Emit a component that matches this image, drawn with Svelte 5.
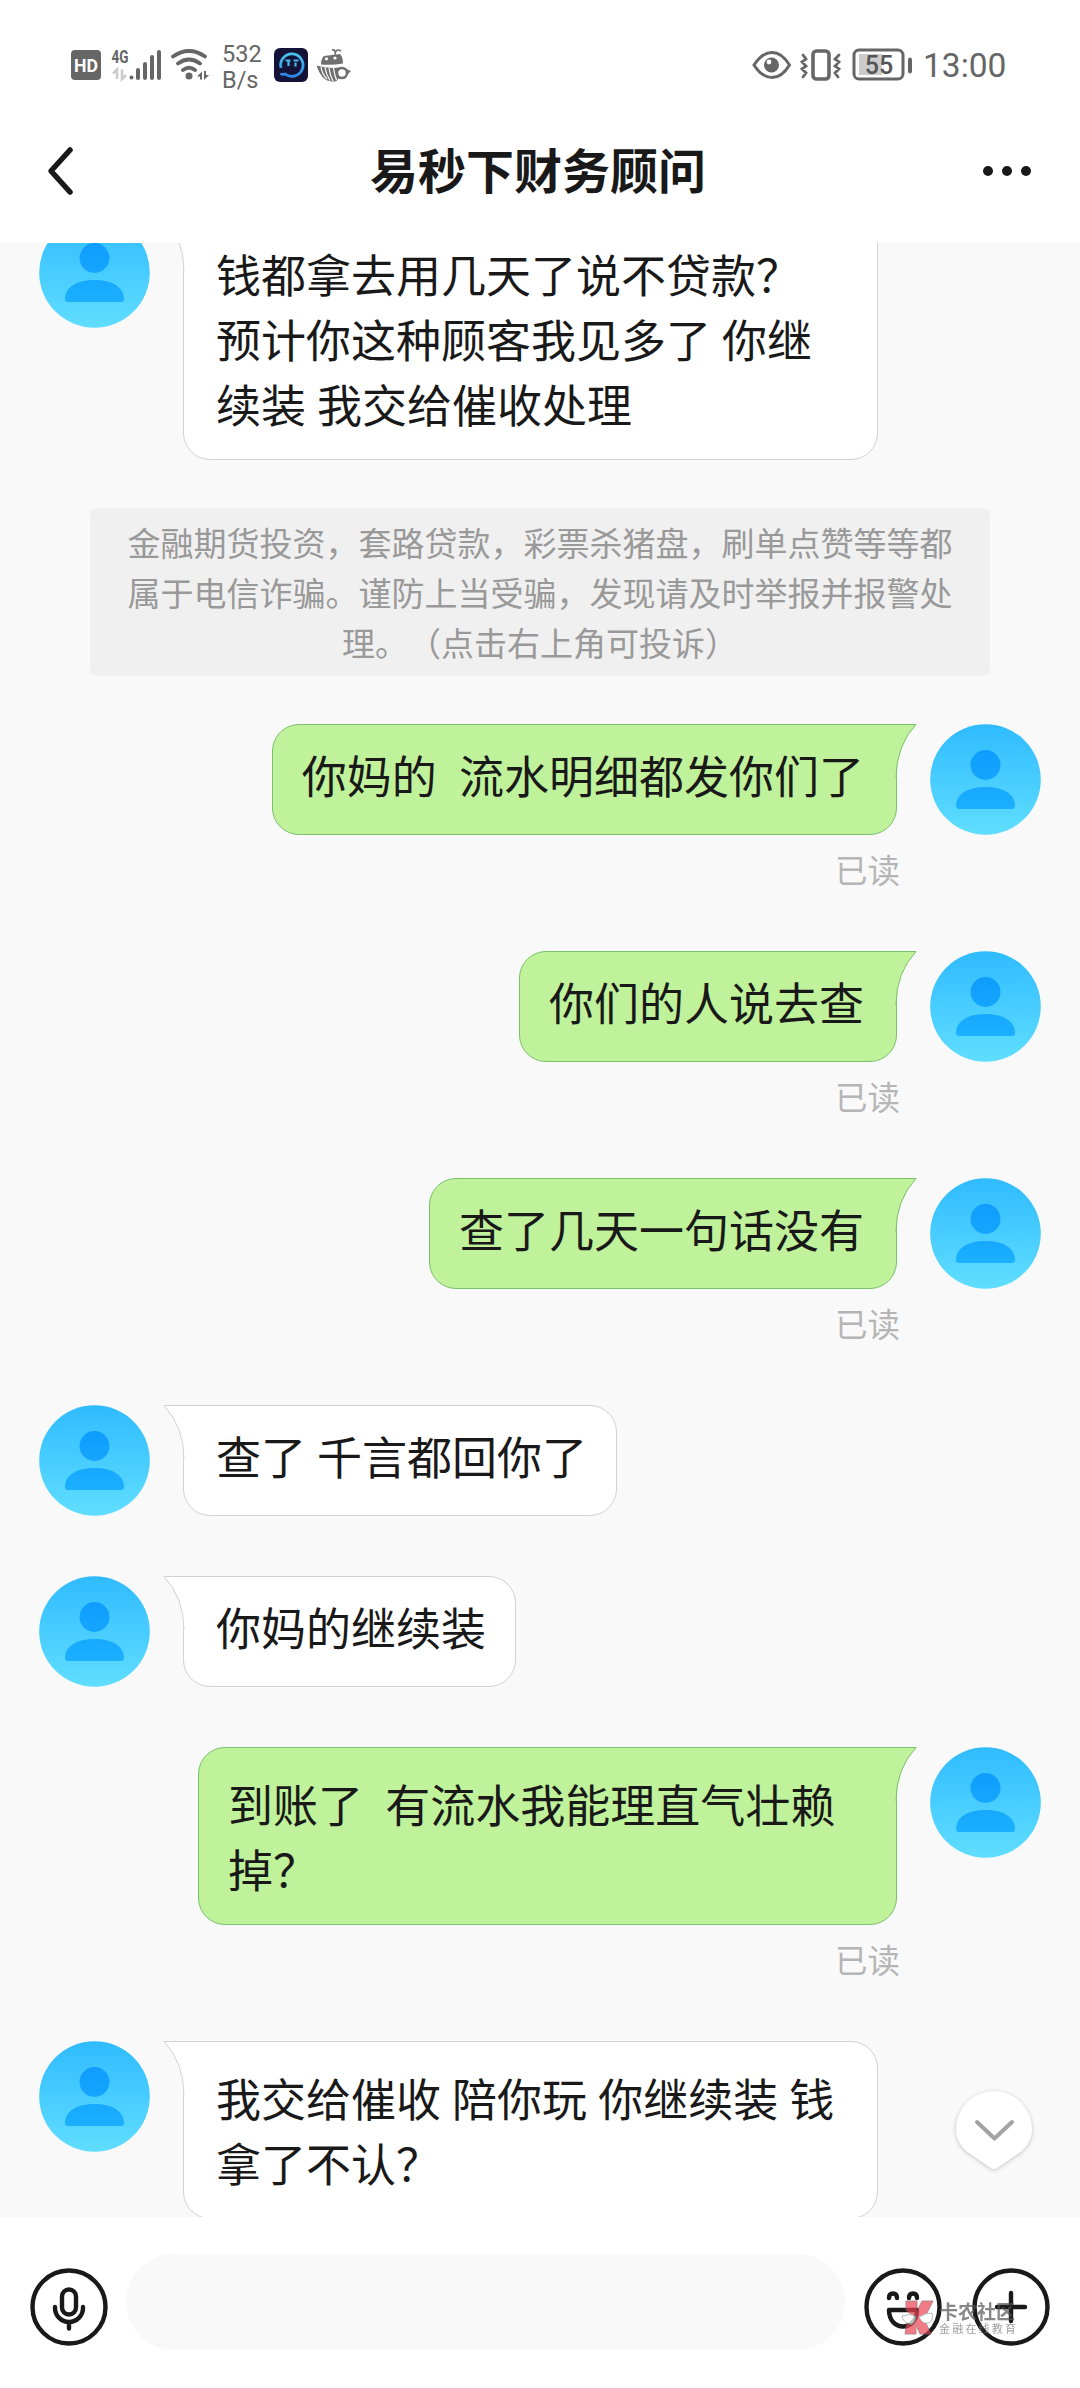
<script lang="ts">
	type Item = {
		kind: 'in' | 'out' | 'notice';
		text: string;
	};

	const title = '易秒下财务顾问';

	const items: Item[] = [
		{ kind: 'in', text: '钱都拿去用几天了说不贷款？\n预计你这种顾客我见多了 你继\n续装 我交给催收处理' },
		{
			kind: 'notice',
			text: '金融期货投资，套路贷款，彩票杀猪盘，刷单点赞等等都\n属于电信诈骗。谨防上当受骗，发现请及时举报并报警处\n理。（点击右上角可投诉）'
		},
		{ kind: 'out', text: '你妈的  流水明细都发你们了' },
		{ kind: 'out', text: '你们的人说去查' },
		{ kind: 'out', text: '查了几天一句话没有' },
		{ kind: 'in', text: '查了 千言都回你了' },
		{ kind: 'in', text: '你妈的继续装' },
		{ kind: 'out', text: '到账了  有流水我能理直气壮赖\n掉？' },
		{ kind: 'in', text: '我交给催收 陪你玩 你继续装 钱\n拿了不认？' }
	];
</script>

{#snippet avatar()}
	<svg class="avatar" viewBox="0 0 111 111" aria-hidden="true">
		<defs>
			<linearGradient id="sky" x1="0" y1="0" x2="0" y2="1">
				<stop offset="0" stop-color="#2fbbff" />
				<stop offset="1" stop-color="#60deff" />
			</linearGradient>
			<linearGradient id="person" x1="0" y1="26" x2="0" y2="86" gradientUnits="userSpaceOnUse">
				<stop offset="0" stop-color="#0f9cff" />
				<stop offset="1" stop-color="#1cb0ff" />
			</linearGradient>
		</defs>
		<circle cx="55.5" cy="55.5" r="55.3" fill="url(#sky)" />
		<circle cx="55.5" cy="41" r="15" fill="url(#person)" />
		<path d="M26 82C26 70 38 63 55.5 63S85 70 85 82q0 3-3 3H29q-3 0-3-3z" fill="url(#person)" />
	</svg>
{/snippet}

<div class="screen">
	<div class="status">
		<svg class="status-left" viewBox="0 0 150 40" aria-hidden="true">
			<rect x="1" y="5" width="30" height="30" rx="4" fill="#666" />
			<text x="16" y="26.5" class="hd" text-anchor="middle" textLength="24" lengthAdjust="spacingAndGlyphs">HD</text>
			<text x="41.500" y="17.500" class="net" textLength="17" lengthAdjust="spacingAndGlyphs">4G</text>
			<path d="M43 28.500l4-4v9.500M52 24.500v9.500l4-4" stroke="#ccc" stroke-width="2.600" fill="none" />
			<g stroke="#666" stroke-width="4" stroke-linecap="round" fill="none">
				<path d="M61.500 32.500v.1M68 25v8M75 19v14M82 12v21M89 7v26" />
				<path d="M103 11.500Q119 .5 135 11.500M108 18.500Q119 10.500 130 18.500M113 25Q119 20.500 125 25" stroke-width="3.800" />
			</g>
			<circle cx="119" cy="31" r="3.500" fill="#666" />
			<path d="M127 31.500l5-5v8h-2v-3zM134 26v9l5-5h-3v-4z" fill="#666" />
		</svg>
		<div class="speed">532<br />B/s</div>
		<svg class="status-apps" viewBox="0 0 80 36" aria-hidden="true">
			<defs>
				<linearGradient id="ring" x1="0" y1="0" x2="0" y2="1">
					<stop offset="0" stop-color="#49c5e8" />
					<stop offset="1" stop-color="#2d85e6" />
				</linearGradient>
			</defs>
			<rect x="0" y="1" width="34" height="34" rx="6" fill="#151238" />
			<path d="M7 21A11.200 11.200 0 1 1 11 27q-2.500 1-4.500-.5" fill="none" stroke="url(#ring)" stroke-width="2.800" />
			<path d="M11.500 13.500h5M19.500 13.500h5M14.500 14v5M21.500 15.500v4" stroke="#45b8e8" stroke-width="2.200" fill="none" />
			<g fill="#707070">
				<path d="M50 9l16-2q3 3 3 9.500-11 2-22 1 0-6 3-8.500z" />
				<path d="M42.500 18.500q13 4 25 1.500 0 9-5 14-8 2-14-4-4-5-6-11.500z" />
				<path d="M70 21l7 3-4 4-4-2z" />
			</g>
			<g fill="none" stroke="#fff" stroke-width="1.200">
				<path d="M47 20q1 7 6 12M51 20.500q1 7 5 13M55 21q1 7 4 13M59.500 21q1 7 3 12" />
			</g>
			<circle cx="68" cy="26" r="5" fill="#fff" stroke="#707070" stroke-width="2.600" />
			<path d="M61 8q1-6-3-5M61 7q1-6 6-3" fill="none" stroke="#707070" stroke-width="1.600" />
			<circle cx="52.500" cy="11.800" r="1.600" fill="#fff" />
			<circle cx="61" cy="11" r="1.600" fill="#fff" />
		</svg>
		<svg class="status-right" viewBox="0 0 164 40" aria-hidden="true">
			<g fill="none" stroke="#666" stroke-width="3">
				<path d="M2 20Q10 7.500 20 7.500T37.500 20Q30 32.500 20 32.500T2 20z" />
				<rect x="61" y="6" width="16" height="28" rx="3.500" stroke-width="3.600" />
				<path d="M51 10l3 4-4 3 4 4-4 3 4 4-3 4M87 10l-4 4 4 3-4 4 4 3-4 4 3 4" stroke-width="2.800" stroke-linecap="round" />
				<rect x="102" y="5" width="49" height="29" rx="5" />
			</g>
			<circle cx="19.500" cy="20" r="7.500" fill="#666" />
			<circle cx="17" cy="17" r="2.400" fill="#fff" />
			<rect x="107" y="9" width="23" height="21" fill="#ccc" />
			<rect x="156" y="12.500" width="4" height="16" rx="2" fill="#666" />
			<text x="127" y="28.500" class="level" text-anchor="middle">55</text>
		</svg>
		<span class="clock">13:00</span>
	</div>

	<header>
		<svg class="back" viewBox="0 0 30 50" aria-label="返回">
			<path d="M24 4L5 25l19 21" />
		</svg>
		<h1>{title}</h1>
		<svg class="more" viewBox="0 0 50 12" aria-label="更多">
			<circle cx="6" cy="6" r="5" />
			<circle cx="25" cy="6" r="5" />
			<circle cx="44" cy="6" r="5" />
		</svg>
	</header>

	<main>
		{#each items as item}
			{#if item.kind === 'notice'}
				<p class="notice">{item.text}</p>
			{:else}
				<div class="row {item.kind}">
					{@render avatar()}
					<div class="content">
						<div class="bubble" class:multi={item.text.includes('\n')}>
							<span class="text">{item.text}</span>
							<svg class="tail" viewBox="0 0 22 54" aria-hidden="true">
								<path class="tail-fill" d="M0 0H21.500Q1.500 22 1.500 54H0z" />
								<path class="tail-line" d="M0 .5H21Q1 22 1 54" />
							</svg>
						</div>
						{#if item.kind === 'out'}
							<span class="read">已读</span>
						{/if}
					</div>
				</div>
			{/if}
		{/each}

		<svg class="jump" viewBox="0 0 90 96" aria-label="回到底部">
			<path class="jump-pin" d="M17 68C9 60 7 53 7 46a38 38 0 0 1 76 0c0 7-2 14-10 22L49 84.500q-4 3-8 0z" />
			<path class="jump-arrow" d="M28 39l17.500 16.500L63 39" />
		</svg>
	</main>

	<footer>
		<svg class="tool" viewBox="0 0 80 80" aria-label="语音">
			<circle cx="40" cy="40" r="36.500" />
			<rect x="33" y="22.500" width="14" height="25" rx="7" />
			<path d="M26 40v1a14 14 0 0 0 28 0v-1M40 55v6.500" />
		</svg>
		<div class="field"></div>
		<svg class="tool emoji" viewBox="0 0 80 80" aria-label="表情">
			<circle cx="40" cy="40" r="36.500" />
			<path d="M26 31q0-4.500 4-4.500t4 4.500M46 31q0-4.500 4-4.500t4 4.500M26 43h28c0 22-28 22-28 0z" />
		</svg>
		<svg class="tool" viewBox="0 0 80 80" aria-label="添加">
			<circle cx="40" cy="40" r="36.500" />
			<path d="M40 26v28M26 40h28" />
		</svg>

		<div class="stamp">
			<svg class="stamp-logo" viewBox="0 0 34 36" aria-hidden="true">
				<path d="M5 1h11v10l5-10h11l-7 14q-1 4 0 8l5 11H19l-4-9v9H4l2-13 6-5-7-6z" fill="#ec4352" stroke="#8e555a" />
				<path d="M1 16q8-3 14 0-1 10-7 8t-7-8zM18 17q6-4 13-4 2 9-4 10t-9-6z" fill="#fff" stroke="#999" />
			</svg>
			<div class="stamp-text">
				<b>卡农社区</b>
				<small>金融在线教育</small>
			</div>
		</div>
	</footer>
</div>

<style>
	:global(body) {
		margin: 0;
	}

	.screen {
		display: flex;
		flex-direction: column;
		width: 1080px;
		height: 2388px;
		overflow: hidden;
		background: #fff;
		color: #191919;
		font-family: 'Noto Sans CJK SC', sans-serif;
		text-spacing-trim: space-all;
	}

	svg {
		display: block;
		flex: none;
	}

	.status {
		display: flex;
		align-items: center;
		box-sizing: border-box;
		height: 104px;
		padding: 30px 0 0 70px;
		color: #666;
		font-family: Roboto, sans-serif;
	}

	.status-left {
		width: 150px;
		height: 40px;
		margin-top: -4px;
	}

	.hd {
		fill: #fff;
		font: 700 18px Roboto, sans-serif;
	}

	.net {
		fill: #666;
		font: 700 18px Roboto, sans-serif;
	}

	.speed {
		width: 52px;
		margin: 0 0 0 2px;
		font-size: 23.5px;
		line-height: 26px;
	}

	.status-apps {
		width: 80px;
		height: 36px;
		margin-top: -4px;
	}

	.status-right {
		width: 164px;
		height: 40px;
		margin: -4px 0 0 398px;
	}

	.level {
		fill: #555;
		font: 500 25px Roboto, sans-serif;
	}

	.clock {
		margin: -2px 0 0 7px;
		font-size: 33.5px;
		line-height: 40px;
	}

	header {
		display: flex;
		align-items: center;
		justify-content: space-between;
		box-sizing: border-box;
		height: 139px;
		padding: 0 48px 5px 46px;
	}

	.back {
		width: 30px;
		height: 50px;
		margin-right: 18px;
		fill: none;
		stroke: #191919;
		stroke-width: 5.5;
		stroke-linecap: round;
		stroke-linejoin: round;
	}

	h1 {
		margin: -6px 0 0;
		font-size: 48px;
		font-weight: 700;
		line-height: 70px;
	}

	.more {
		width: 50px;
		height: 12px;
		fill: #191919;
	}

	main {
		position: relative;
		flex: none;
		height: 1974px;
		overflow: hidden;
		background: #f9f9f9;
	}

	.row {
		display: flex;
		align-items: flex-start;
		gap: 33px;
		padding: 0 39px;
		margin-bottom: 60px;
	}

	.row:first-child {
		margin: -26px 0 48px;
	}

	.row.out {
		flex-direction: row-reverse;
		margin-bottom: 64px;
	}

	.avatar {
		width: 111px;
		height: 111px;
	}

	.content {
		display: flex;
		flex-direction: column;
		align-items: flex-end;
	}

	.bubble {
		position: relative;
		box-sizing: border-box;
		padding: 17px 29px 27px 32px;
		background: #fff;
		border: 1px solid #d2d2d2;
		border-radius: 0 27px 27px 27px;
		font-size: 45px;
		line-height: 65px;
		word-spacing: 1px;
	}

	.text {
		display: block;
		white-space: pre;
	}

	.bubble.multi {
		width: 695px;
		padding-top: 23px;
		padding-bottom: 23px;
	}

	.out .bubble {
		padding-left: 29px;
		padding-right: 32px;
		background: #c0f19b;
		border-color: #7cc06f;
		border-radius: 27px 0 27px 27px;
	}

	.out .bubble.multi {
		width: 699px;
	}

	.tail {
		position: absolute;
		top: -1px;
		left: -21px;
		width: 22px;
		height: 54px;
		transform: scaleX(-1);
	}

	.out .tail {
		right: -21px;
		left: auto;
		transform: none;
	}

	.tail-fill {
		fill: #fff;
	}

	.tail-line {
		fill: none;
		stroke: #d2d2d2;
	}

	.out .tail-fill {
		fill: #c0f19b;
	}

	.out .tail-line {
		stroke: #7cc06f;
	}

	.read {
		margin: 16px -3px 1px 0;
		color: #b5b5b5;
		font-size: 32.5px;
		line-height: 35px;
	}

	.notice {
		box-sizing: border-box;
		width: 900px;
		margin: 0 auto 48px;
		padding: 9px 0;
		background: #f0f0f0;
		border-radius: 8px;
		color: #999;
		font-size: 33px;
		line-height: 50px;
		text-align: center;
		white-space: pre;
	}

	.jump {
		position: absolute;
		right: 41px;
		bottom: 38px;
		width: 90px;
		height: 96px;
	}

	.jump-pin {
		fill: #fff;
		filter: drop-shadow(0 1px 2px rgba(0, 0, 0, 0.22));
	}

	.jump-arrow {
		fill: none;
		stroke: #a3a3a3;
		stroke-width: 4;
		stroke-linecap: round;
		stroke-linejoin: round;
	}

	footer {
		position: relative;
		display: flex;
		align-items: flex-start;
		flex: none;
		box-sizing: border-box;
		height: 171px;
		padding: 37px 29px 0;
		background: #fff;
	}

	.tool {
		width: 80px;
		height: 80px;
		margin-top: 13px;
		fill: none;
		stroke: #191919;
		stroke-width: 4.4;
		stroke-linecap: round;
		stroke-linejoin: round;
	}

	.field {
		width: 719px;
		height: 96px;
		margin: 0 18px 0 17px;
		border-radius: 48px;
		background: #f9f9f9;
	}

	.emoji {
		margin-right: 28px;
	}

	.stamp {
		position: absolute;
		top: 83px;
		left: 901px;
		display: flex;
		gap: 4px;
		color: #555;
		opacity: 0.7;
	}

	.stamp-logo {
		width: 34px;
		height: 36px;
	}

	.stamp-text {
		display: flex;
		flex-direction: column;
		white-space: nowrap;
	}

	.stamp-text b {
		font-size: 19px;
		line-height: 21px;
	}

	.stamp-text small {
		color: #777;
		font-size: 11px;
		line-height: 15px;
		letter-spacing: 2.2px;
	}
</style>
